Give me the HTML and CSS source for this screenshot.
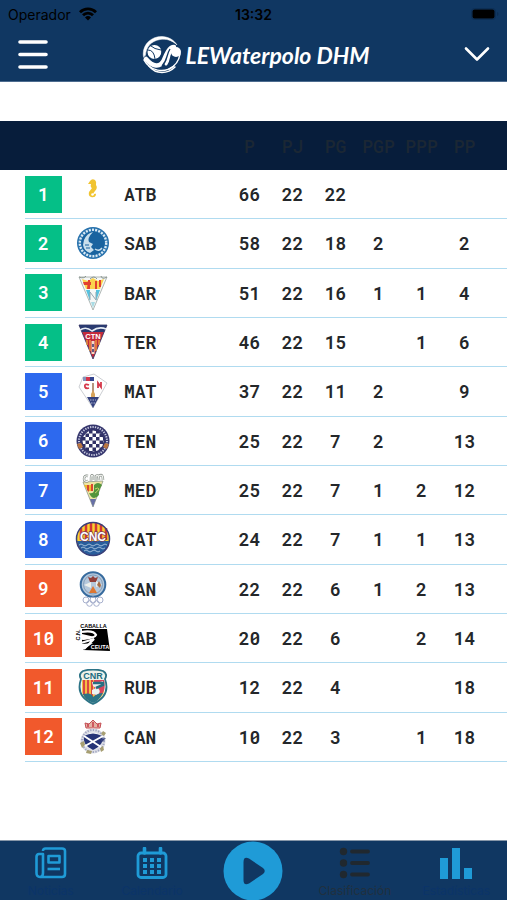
FILE: index.html
```html
<!DOCTYPE html>
<html lang="es">
<head>
<meta charset="utf-8">
<meta name="viewport" content="width=device-width, initial-scale=1">
<title>LEWaterpolo DHM</title>
<link rel="stylesheet" href="styles.css">
</head>
<body>
<div class="app">
  <header class="top">
    <div class="status">
      <span class="carrier">Operador
        <svg width="18" height="14" viewBox="0 0 18 14" aria-hidden="true"><g fill="none" stroke="#000" stroke-width="2.8"><path d="M1 5.2A11.3 11.3 0 0 1 17 5.2"/><path d="M4 8.3a7 7 0 0 1 10 0"/></g><path d="M6 10.500a4.300 4.300 0 0 1 6 0L9 13.600z"/></svg>
      </span>
      <span class="clock">13:32</span>
      <span class="battery"><svg width="28" height="12" viewBox="0 0 28 12" aria-hidden="true"><rect x=".5" y=".5" width="24" height="11" rx="3" fill="none" stroke="#0c2e54"/><rect x="1.500" y="1.500" width="22" height="9" rx="2"/><path d="M26 4v4q1.500-.5 1.500-2T26 4z" fill="#0c2e54"/></svg></span>
    </div>
    <div class="bar">
      <button class="icon-btn" aria-label="Menú">
        <svg width="30" height="30" viewBox="0 0 30 30"><path d="M2 2H28M2 14.500H28M2 27H28" stroke="#fff" stroke-width="3.600" stroke-linecap="round"/></svg>
      </button>
      <h1 class="brand">
        <svg width="40" height="40" viewBox="0 0 40 40" aria-hidden="true">
          <g fill="none" stroke="#fff" stroke-linecap="round">
            <path d="M1.500 22C-.5 11 8 1.500 20 1.500C27 2 32 5 35 10C30 5 24 3.500 18 4.500C9 6 4 12 3.500 20Z" fill="#fff" stroke-width=".5"/>
            <path d="M2 25C8 36 22 39 32 31" stroke-width="1.500"/>
            <path d="M7 31C14 40 26 39 33 32" stroke-width="1.500"/>
            <path d="M4 24C11 32 18 33 22 25C24 20 27 12 32 12" stroke-width="4.500"/>
            <path d="M24 29C28 24 25 18 31 15" stroke-width="3"/>
            <path d="M38 19C37 26 33 31 27 34" stroke-width="1.500"/>
          </g>
          <circle cx="12.500" cy="17" r="7" fill="#fff"/>
          <circle cx="34" cy="17" r="5" fill="#fff"/>
          <g fill="none" stroke="#103762" stroke-width="1"><path d="M6 15Q12 15 13 24M9 11Q12 14 19 15"/><path d="M20 14C21 21 17 25 10 25" stroke-width="1.300"/><path d="M28 14C24 20 26 25 20 31" stroke-width="1.300"/></g>
        </svg>
        <span>LEWaterpolo DHM</span>
      </h1>
      <button class="icon-btn" aria-label="Cambiar competición">
        <svg width="28" height="18" viewBox="0 0 28 18"><path d="M3 2.500L14 13.500L25 2.500" fill="none" stroke="#fff" stroke-width="2.600" stroke-linecap="round" stroke-linejoin="round"/></svg>
      </button>
    </div>
  </header>

  <main class="content">
    <table class="standings">
      <colgroup><col class="c-pos"><col class="c-crest"><col><col class="c-stat"><col class="c-stat"><col class="c-stat"><col class="c-stat"><col class="c-stat"><col class="c-last"></colgroup>
      <thead>
        <tr><th></th><th></th><th></th><th>P</th><th>PJ</th><th>PG</th><th>PGP</th><th>PPP</th><th>PP</th></tr>
      </thead>
      <tbody>
        <tr><td><span class="pos green">1</span></td><td class="crest"><svg viewBox="0 0 36 36"><path d="M15 5Q17 2 20 4Q22 6 21 9Q23 12 20 15Q18 17 18 19Q21 16 21 19Q20 22 16 21Q13 20 14 16L17 12Q15 11 16 8L13 8Z" fill="#f1c431"/><circle cx="17.500" cy="18.500" r="1.300" fill="#fff"/></svg></td><th scope="row">ATB</th><td>66</td><td>22</td><td>22</td><td></td><td></td><td></td></tr>

        <tr><td><span class="pos green">2</span></td><td class="crest"><svg viewBox="0 0 36 36"><circle cx="18" cy="18" r="16" fill="#2872ad"/><circle cx="18" cy="18" r="13.200" fill="none" stroke="#dcebf5" stroke-width="2.400" stroke-dasharray="2 1.200"/><circle cx="18" cy="18" r="11.500" fill="#19639f"/><path d="M9 15Q12 8 18 7Q12 13 14 17L18 19L16 22L19 25L15 28Q9 26 8 20Z" fill="#c8dfed"/><path d="M10 20h4M11 23h4" stroke="#19639f"/><path d="M20 24Q24 27 27 23" fill="none" stroke="#c8dfed" stroke-width="1.500"/></svg></td><th scope="row">SAB</th><td>58</td><td>22</td><td>18</td><td>2</td><td></td><td>2</td></tr>

        <tr><td><span class="pos green">3</span></td><td class="crest"><svg viewBox="0 0 36 36"><path d="M4 2L32 2L18 35Z" fill="#f5f7f6" stroke="#9ca6a3" stroke-width=".8"/><path d="M7 4L13 6L18 3L23 6L29 4L25 14H11Z" fill="#fbd34e"/><path d="M8 7h8v3h-7zM13 5h2v9h-3zM20 6h2v8h-2zM24 5h2v7h-2z" fill="#e2402f"/><path d="M4 2Q9 4 11 1M15 4Q19 0 22 4M26 1Q27 5 32 2" fill="none" stroke="#8b9690"/><path d="M11 15h4v11zM21 15h4l-4 11z" fill="#55c2df"/><path d="M15 17v8M15 17l6 8M21 17v8" stroke="#91a6b0"/><path d="M16 27h4l-2 6z" fill="#a8dbe4"/></svg></td><th scope="row">BAR</th><td>51</td><td>22</td><td>16</td><td>1</td><td>1</td><td>4</td></tr>

        <tr><td><span class="pos green">4</span></td><td class="crest"><svg viewBox="0 0 36 36"><path d="M4 1H32L18 35Z" fill="#c42b3c" stroke="#2b315f" stroke-width=".8"/><path d="M4 1H32L29 8H7Z" fill="#293a70"/><path d="M5 6Q11 2 17 7Q24 2 31 5" fill="none" stroke="#e6edf4" stroke-width="1.600"/><path d="M12 16v5M15 16v11M21 16v11M24 16v5" stroke="#f0a33c" stroke-width="1.300"/><path d="M18 17v13" stroke="#f4dbc4" stroke-width="3"/><text x="18" y="15" class="mark" font-size="7.500" fill="#fff">CTN</text><path d="M18 20v3m0 2v3" stroke="#30366a" stroke-width="1.500"/></svg></td><th scope="row">TER</th><td>46</td><td>22</td><td>15</td><td></td><td>1</td><td>6</td></tr>

        <tr><td><span class="pos blue">5</span></td><td class="crest"><svg viewBox="0 0 36 36"><path d="M8 4L19 1L32 10L18 35L4 14Z" fill="#fefefe" stroke="#bfc2c7" stroke-width=".8"/><path d="M8 4h4v4H8z" fill="#8694bd"/><path d="M11 4h4v4h-4z" fill="#d3354b"/><path d="M15 4h4v4h-4z" fill="#33448f"/><path d="M14 12Q9 10 10 14Q11 16 14 15" fill="none" stroke="#d5384a" stroke-width="1.800"/><path d="M23 15V10L26 14V9" fill="none" stroke="#d5384a" stroke-width="1.800"/><path d="M18 10v14" stroke="#8c5c38" stroke-width="1.300"/><path d="M16 21l2-4 2 4v3h-4z" fill="#d7a45c"/><path d="M12 24H24L18 35Z" fill="#35427e"/><path d="M15 27h6M16 30h4" stroke="#afb5d4" stroke-dasharray="1.500 1"/></svg></td><th scope="row">MAT</th><td>37</td><td>22</td><td>11</td><td>2</td><td></td><td>9</td></tr>

        <tr><td><span class="pos blue">6</span></td><td class="crest"><svg viewBox="0 0 36 36"><defs><pattern id="check" width="7" height="7" patternUnits="userSpaceOnUse"><rect width="7" height="7" fill="#fff"/><path d="M0 0h3.500v3.500H0zM3.500 3.500h3.500v3.500H3.500z" fill="#303166"/></pattern></defs><circle cx="18" cy="18" r="16.500" fill="#35366d"/><circle cx="18" cy="18" r="14" fill="none" stroke="#c9cbe0" stroke-width="2" stroke-dasharray="1.300 1.200"/><circle cx="18" cy="18" r="11" fill="url(#check)" stroke="#303166"/><path d="M2 21l4-1 2 4-4 2zM34 21l-4-1-2 4 4 2z" fill="#ba7540"/></svg></td><th scope="row">TEN</th><td>25</td><td>22</td><td>7</td><td>2</td><td></td><td>13</td></tr>

        <tr><td><span class="pos blue">7</span></td><td class="crest"><svg viewBox="0 0 36 36"><path d="M8 10L28 9L18 35Z" fill="#eee5a2" stroke="#8f988d" stroke-width=".8"/><path d="M9 13h4v6zM14 13h2v6h-2z" fill="#f1bb28"/><path d="M12 13h2v7l-2-2zM16 12h2v7h-2z" fill="#d84732"/><path d="M19 13Q23 9 27 13Q23 19 24 23Q18 30 14 21Q19 22 19 18Z" fill="#53953b"/><path d="M20 17q3-2 4 0-2 3-4 4" fill="none" stroke="#c8d26a"/><path d="M15 27h6l-3 8z" fill="#6770a6"/><path d="M13 4Q9 3 9 7Q9 10 13 9M16 9V6Q16 2 18 4V8M21 9V4Q24 2 24 8M24 4Q28 1 28 8" fill="none" stroke="#777f79" stroke-width="2.400"/><path d="M13 4Q9 3 9 7Q9 10 13 9M16 9V6Q16 2 18 4V8M21 9V4Q24 2 24 8M24 4Q28 1 28 8" fill="none" stroke="#f2f4f0" stroke-width="1.300"/></svg></td><th scope="row">MED</th><td>25</td><td>22</td><td>7</td><td>1</td><td>2</td><td>12</td></tr>

        <tr><td><span class="pos blue">8</span></td><td class="crest"><svg viewBox="0 0 36 36"><circle cx="18" cy="18" r="16.500" fill="#f9d22f"/><path d="M6 7v12M11 3v16M16 2v17M21 2v17M26 3v16M31 7v12" stroke="#d23735" stroke-width="2.500"/><path d="M2 20H34Q32 34 18 35Q5 34 2 20Z" fill="#285d9b"/><path d="M4 24q2-2 4 0t4 0 4 0 4 0 4 0 4 0 4 0M6 27q2-2 4 0t4 0 4 0 4 0 4 0 4 0M9 30q2-2 4 0t4 0 4 0 4 0" fill="none" stroke="#a9c4de" stroke-width=".9"/><circle cx="18" cy="18" r="16.500" fill="none" stroke="#3a3f78" stroke-width="1.500"/><text x="18" y="19.500" class="mark outlined" font-size="12" fill="#fff" stroke="#7a3b59" stroke-width="1.500">CNC</text></svg></td><th scope="row">CAT</th><td>24</td><td>22</td><td>7</td><td>1</td><td>1</td><td>13</td></tr>

        <tr><td><span class="pos red">9</span></td><td class="crest"><svg viewBox="0 0 36 36"><circle cx="18" cy="13.500" r="12.300" fill="#b5c8dc" stroke="#376b9e" stroke-width="2"/><circle cx="18" cy="13.500" r="9.500" fill="none" stroke="#829db9"/><path d="M13 6l3 1 2-2 2 2 3-1-2 5h-6z" fill="#923f39"/><path d="M9 14l7-3v6zM27 14l-6-4v6z" fill="#eef0ec"/><path d="M14 22l4-7 4 7z" fill="#de7631"/><path d="M22 14l2-4 2 4-1 3z" fill="#a66c47"/><g fill="none" stroke="#a7b0cd" stroke-width="1"><circle cx="11" cy="29" r="3"/><circle cx="18" cy="29" r="3"/><circle cx="25" cy="29" r="3"/><circle cx="14.500" cy="32.500" r="2.800"/><circle cx="21.500" cy="32.500" r="2.800"/></g></svg></td><th scope="row">SAN</th><td>22</td><td>22</td><td>6</td><td>1</td><td>2</td><td>13</td></tr>

        <tr><td><span class="pos red">10</span></td><td class="crest"><svg viewBox="0 0 36 36"><text x="18.500" y="7.500" class="mark" font-size="5.500">CABALLA</text><path d="M7 9H32L35 31L8 30L18 23L7 24V20L20 17L7 14Z"/><path d="M6 12Q19 10 21 15Q20 18 8 19" fill="none" stroke="#fff" stroke-width="2.200"/><path d="M6 23L19 19L9 29" fill="none" stroke="#fff" stroke-width="2.200"/><text x="25" y="29" class="mark" font-size="5.500" fill="#fff">CEUTA</text><text transform="translate(5 15) rotate(-90)" class="mark" font-size="5.500">C.N.</text></svg></td><th scope="row">CAB</th><td>20</td><td>22</td><td>6</td><td></td><td>2</td><td>14</td></tr>

        <tr><td><span class="pos red">11</span></td><td class="crest"><svg viewBox="0 0 36 36"><path d="M8 2Q18-1 28 2Q33 5 30 10Q36 27 18 35Q0 27 6 10Q3 5 8 2Z" fill="#eef1e9" stroke="#2c7386" stroke-width="1.800"/><path d="M7 11H29V23Q27 30 18 33Q8 30 7 23Z" fill="#f5bf45"/><path d="M9 11v15M13 11v19M17 11v20" stroke="#d94745" stroke-width="2"/><path d="M19 11h10q3 13-7 18l-3-4z" fill="#d9445b"/><path d="M17 13Q24 14 28 12V17L23 19Q27 23 22 26L17 25V21L21 19L18 17Z" fill="#ecf2f0"/><path d="M18 14h10v2l-7 3" fill="none" stroke="#286f82" stroke-width="2.500"/><path d="M8 25Q17 23 18 28Q23 24 28 24Q24 32 18 34Q10 31 8 25Z" fill="#2d7486"/><text x="18" y="9.500" class="mark" font-size="9" fill="#206c80">CNR</text></svg></td><th scope="row">RUB</th><td>12</td><td>22</td><td>4</td><td></td><td></td><td>18</td></tr>

        <tr><td><span class="pos red">12</span></td><td class="crest"><svg viewBox="0 0 36 36"><path d="M11 9L10 4L14 5L18 1L22 5L26 4L25 9Z" fill="#e3b2a4" stroke="#c54e54"/><path d="M13 8V5M18 8V3M23 8V5" stroke="#c93b48" stroke-width="1.500"/><circle cx="18" cy="22" r="10.500" fill="#f8f8f8" stroke="#dedfe6" stroke-width="4"/><circle cx="18" cy="22" r="11" fill="none" stroke="#a1a6c2" stroke-width="2" stroke-dasharray="1.300 1.400"/><path d="M5 24l4-2 1 4-3 3zM12 31l5 1-1 3-5-1zM25 29l3-2 1 4-3 2zM28 12l3 2-2 3-3-2z" fill="#a79f72"/><path d="M9 17Q18 12 27 17Q30 25 18 31Q7 26 9 17Z" fill="#263477"/><path d="M9 17L26 28M28 17L10 27" stroke="#fff" stroke-width="2"/><path d="M25 20l6-1-4 4" fill="#36427e"/></svg></td><th scope="row">CAN</th><td>10</td><td>22</td><td>3</td><td></td><td>1</td><td>18</td></tr>
      </tbody>
    </table>
  </main>

  <nav class="tabs">
    <a class="tab" href="#noticias"><svg width="32" height="32" viewBox="0 0 32 32" fill="none" stroke="#1f9bd7" stroke-width="2.600" stroke-linejoin="round"><path d="M8 4Q8 1.500 10.500 1.500H27Q30 1.500 30 4V27Q30 30 27 30H5Q1.500 30 1.500 26V10Q1.500 7 4 7H8V26Q8 30 5 30"/><path d="M13.500 9H24.500V15.500H13.500Z"/><path d="M12.500 22H25"/></svg><span>Noticias</span></a>
    <a class="tab" href="#calendario"><svg width="32" height="32" viewBox="0 0 32 32"><rect x="2" y="6" width="28" height="24.500" rx="3" fill="none" stroke="#1f9bd7" stroke-width="2.800"/><path d="M8.500 1.500V6M24.500 1.500V6" stroke="#1f9bd7" stroke-width="3.600" stroke-linecap="round"/><path d="M7 11h4v4H7zm7 0h4v4h-4zm7 0h4v4h-4zM7 17h4v4H7zm7 0h4v4h-4zm7 0h4v4h-4zM7 23h4v4H7zm7 0h4v4h-4zm7 0h4v4h-4z" fill="#1f9bd7"/></svg><span>Calendario</span></a>
    <a class="tab play" href="#directo" aria-label="Directo"><svg viewBox="0 0 60 60"><circle cx="30" cy="30" r="29.500" fill="#1f9bd7"/><path d="M20.500 21Q20.500 15 26 17.500L40 27Q43.500 30 40 33L26 42.500Q20.500 45 20.500 39Z" fill="#103762"/></svg></a>
    <a class="tab current" href="#clasificacion" aria-current="page"><svg width="32" height="32" viewBox="0 0 32 32"><g fill="#20282f"><circle cx="4.500" cy="4.500" r="3.700"/><circle cx="4.500" cy="16" r="3.700"/><circle cx="4.500" cy="27.500" r="3.700"/></g><path d="M13 4.500H29M13 16H29M13 27.500H29" stroke="#20282f" stroke-width="3.800" stroke-linecap="round"/></svg><span>Clasificación</span></a>
    <a class="tab" href="#estadisticas"><svg width="32" height="32" viewBox="0 0 32 32"><path d="M0 11H8V32H0zM12 1H20V32H12zM24 21H32V32H24z" fill="#1f9bd7"/></svg><span>Estadísticas</span></a>
  </nav>
</div>
</body>
</html>
```
FILE: styles.css
```css
* { box-sizing: border-box; }

body {
  margin: 0;
  background: #fff;
  font-family: Inter, "Liberation Sans", sans-serif;
}

.app {
  display: flex;
  flex-direction: column;
  min-height: 100vh;
}

.top {
  background: #103762;
  color: #000;
  border-bottom: 1px solid #4d6c8f;
}

.status {
  display: grid;
  grid-template-columns: 1fr auto 1fr;
  align-items: center;
  height: 28px;
  padding: 0 8px;
  font-size: 14px;
}

.carrier {
  display: flex;
  align-items: center;
  gap: 8px;
}

.clock { font-weight: 600; }

.battery {
  display: flex;
  justify-content: flex-end;
}

.bar {
  display: flex;
  align-items: center;
  justify-content: space-between;
  height: 53px;
  padding: 0 16px 0 18px;
}

.icon-btn {
  display: flex;
  padding: 0;
  border: 0;
  background: none;
}

.brand {
  display: flex;
  align-items: center;
  gap: 4px;
  margin: 0;
  color: #fff;
  font: italic 700 23px/28px Lato, sans-serif;
}

.content {
  display: grid;
  flex: 1;
  padding: 39px 0 78px 25px;
}

.standings {
  width: 100%;
  table-layout: fixed;
  border-spacing: 0;
  color: #24272a;
  font: 600 18px/24px "Roboto Mono", "DejaVu Sans Mono", monospace;
}

.standings th,
.standings td {
  padding: 0;
  text-align: center;
  vertical-align: middle;
}

.standings thead th {
  height: 49px;
  background: #071d3b;
  color: #1b2734;
  font-weight: 500;
}

.standings thead th:first-child { box-shadow: -25px 0 #071d3b; }

.standings tbody th,
.standings tbody td { border-bottom: 1px solid #b0dbf0; }

.standings tbody th { text-align: left; font-weight: 600; }

.standings th:last-child,
.standings td:last-child { padding-right: 21px; }

.c-pos { width: 37px; }
.c-crest { width: 62px; }
.c-stat { width: 43px; }
.c-last { width: 64px; }

.pos {
  display: block;
  height: 37px;
  color: #fff;
  line-height: 37px;
}

.green { background: #05bf87; }
.blue { background: #2d69ee; }
.red { background: #f1592c; }

.crest svg {
  display: block;
  width: 36px;
  height: 36px;
  margin: 0 auto;
}

.mark {
  font-family: "Liberation Sans", sans-serif;
  font-weight: 700;
  text-anchor: middle;
}

.outlined { paint-order: stroke; }

.tabs {
  display: grid;
  grid-template-columns: repeat(5, 1fr);
  height: 60px;
  background: #103762;
  border-top: 1px solid #8797a9;
}

.tab {
  display: flex;
  flex-direction: column;
  align-items: center;
  gap: 4px;
  padding-top: 6px;
  color: #0b3469;
  font-size: 12px;
  line-height: 16px;
  text-decoration: none;
}

.tab.current { color: #20303e; }

.tab.play { padding: 0; }

.play svg {
  width: 60px;
  height: 60px;
}
```
